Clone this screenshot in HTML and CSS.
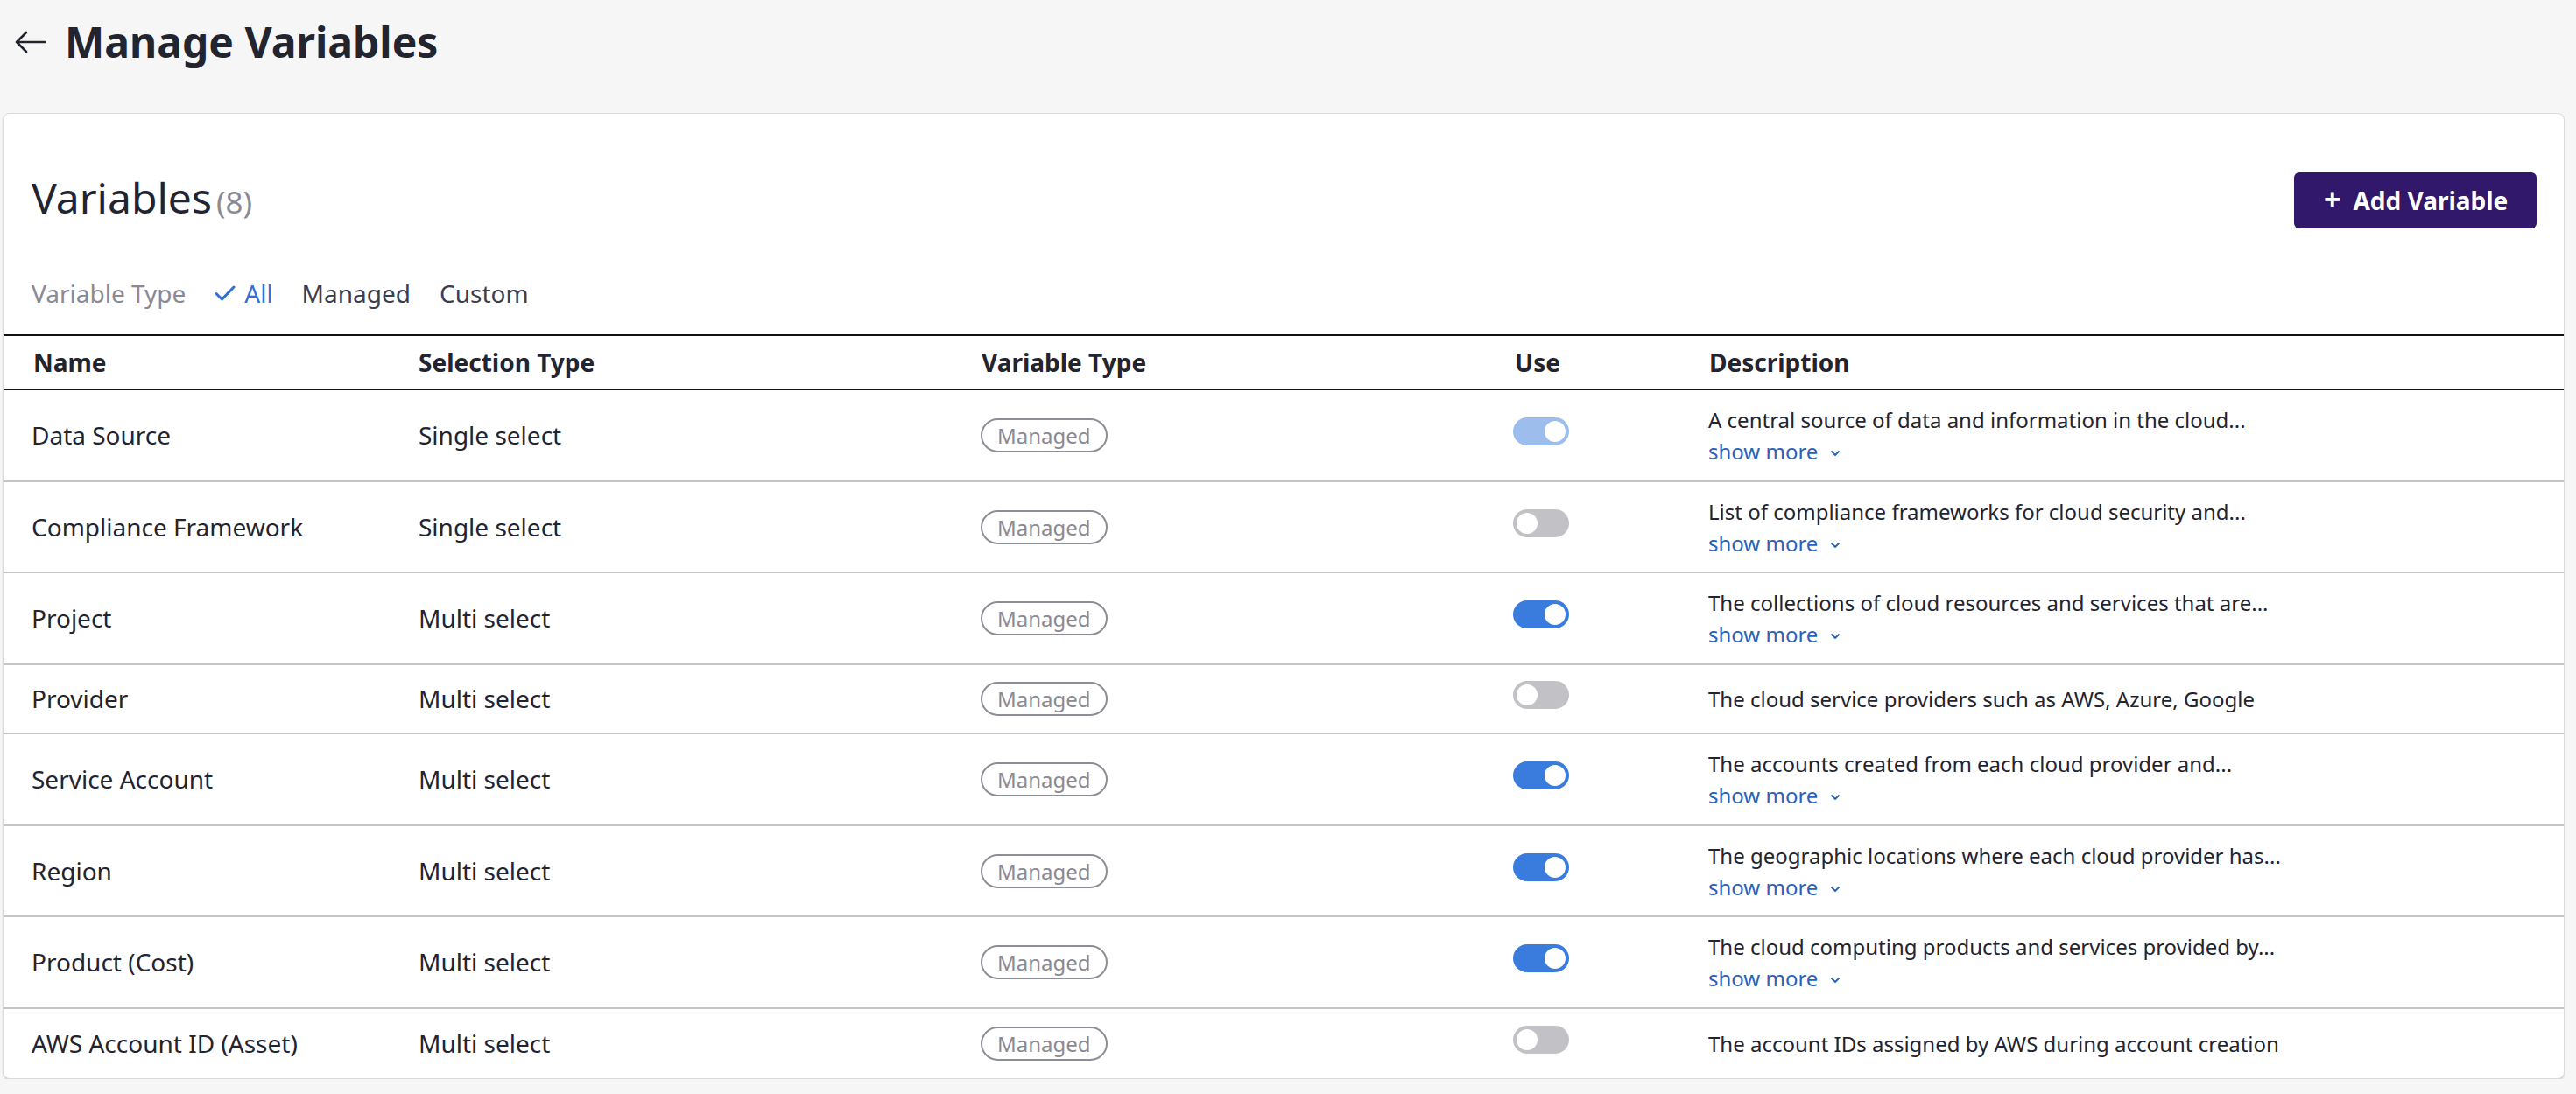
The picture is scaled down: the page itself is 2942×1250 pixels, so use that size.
FILE: index.html
```html
<!DOCTYPE html>
<html lang="en">
<head>
<meta charset="utf-8">
<title>Manage Variables</title>
<link rel="stylesheet" href="styles.css">
</head>
<body>
<header class="page-head">
  <svg class="back" width="36" height="28" viewBox="0 0 36 28" aria-hidden="true"><path d="M35 14H3M14 3L3 14l11 11" fill="none" stroke="#22242f" stroke-width="2.6" stroke-linecap="round" stroke-linejoin="round"/></svg>
  <h1 class="page-title">Manage Variables</h1>
</header>
<section class="card">
  <div class="card-head">
    <h2 class="card-title">Variables<span class="count">(8)</span></h2>
    <button class="btn-add"><span class="plus">+</span>Add Variable</button>
  </div>
  <div class="filters">
    <span class="filter-label">Variable Type</span>
    <span class="filter-opt active"><svg class="check" width="24" height="18" viewBox="0 0 24 18"><path d="M2 9.5l6.5 6.5L22 2" fill="none" stroke="#2f6fd6" stroke-width="3" stroke-linecap="round" stroke-linejoin="round"/></svg>All</span>
    <span class="filter-opt">Managed</span>
    <span class="filter-opt">Custom</span>
  </div>
  <div class="table">
    <div class="row head">
      <div>Name</div><div>Selection Type</div><div>Variable Type</div><div>Use</div><div>Description</div>
    </div>
    <div class="row tall">
      <div>Data Source</div><div>Single select</div><div><span class="badge">Managed</span></div>
      <div><span class="toggle on dim"></span></div>
      <div class="desc"><div>A central source of data and information in the cloud...</div><div class="more">show more<svg width="12" height="8" viewBox="0 0 12 8"><path d="M2 2l4 4 4-4" fill="none" stroke="#2a62bd" stroke-width="1.8" stroke-linecap="round" stroke-linejoin="round"/></svg></div></div>
    </div>
    <div class="row tall">
      <div>Compliance Framework</div><div>Single select</div><div><span class="badge">Managed</span></div>
      <div><span class="toggle"></span></div>
      <div class="desc"><div>List of compliance frameworks for cloud security and...</div><div class="more">show more<svg width="12" height="8" viewBox="0 0 12 8"><path d="M2 2l4 4 4-4" fill="none" stroke="#2a62bd" stroke-width="1.8" stroke-linecap="round" stroke-linejoin="round"/></svg></div></div>
    </div>
    <div class="row tall">
      <div>Project</div><div>Multi select</div><div><span class="badge">Managed</span></div>
      <div><span class="toggle on"></span></div>
      <div class="desc"><div>The collections of cloud resources and services that are...</div><div class="more">show more<svg width="12" height="8" viewBox="0 0 12 8"><path d="M2 2l4 4 4-4" fill="none" stroke="#2a62bd" stroke-width="1.8" stroke-linecap="round" stroke-linejoin="round"/></svg></div></div>
    </div>
    <div class="row short">
      <div>Provider</div><div>Multi select</div><div><span class="badge">Managed</span></div>
      <div><span class="toggle"></span></div>
      <div class="desc"><div>The cloud service providers such as AWS, Azure, Google</div></div>
    </div>
    <div class="row tall">
      <div>Service Account</div><div>Multi select</div><div><span class="badge">Managed</span></div>
      <div><span class="toggle on"></span></div>
      <div class="desc"><div>The accounts created from each cloud provider and...</div><div class="more">show more<svg width="12" height="8" viewBox="0 0 12 8"><path d="M2 2l4 4 4-4" fill="none" stroke="#2a62bd" stroke-width="1.8" stroke-linecap="round" stroke-linejoin="round"/></svg></div></div>
    </div>
    <div class="row tall">
      <div>Region</div><div>Multi select</div><div><span class="badge">Managed</span></div>
      <div><span class="toggle on"></span></div>
      <div class="desc"><div>The geographic locations where each cloud provider has...</div><div class="more">show more<svg width="12" height="8" viewBox="0 0 12 8"><path d="M2 2l4 4 4-4" fill="none" stroke="#2a62bd" stroke-width="1.8" stroke-linecap="round" stroke-linejoin="round"/></svg></div></div>
    </div>
    <div class="row tall">
      <div>Product (Cost)</div><div>Multi select</div><div><span class="badge">Managed</span></div>
      <div><span class="toggle on"></span></div>
      <div class="desc"><div>The cloud computing products and services provided by...</div><div class="more">show more<svg width="12" height="8" viewBox="0 0 12 8"><path d="M2 2l4 4 4-4" fill="none" stroke="#2a62bd" stroke-width="1.8" stroke-linecap="round" stroke-linejoin="round"/></svg></div></div>
    </div>
    <div class="row short last">
      <div>AWS Account ID (Asset)</div><div>Multi select</div><div><span class="badge">Managed</span></div>
      <div><span class="toggle"></span></div>
      <div class="desc"><div>The account IDs assigned by AWS during account creation</div></div>
    </div>
  </div>
</section>
</body>
</html>
```
FILE: styles.css
```css
* { box-sizing: border-box; }
html, body { margin: 0; padding: 0; }
body {
  background: #f6f6f6;
  font-family: "Noto Sans", "Open Sans", sans-serif;
  color: #22242f;
  width: 2942px;
}
.page-head {
  display: flex;
  align-items: center;
  height: 64px;
  margin-top: 16px;
  padding-left: 16px;
  gap: 22px;
}
.back { display: block; }
.page-title {
  margin: 0;
  font-size: 48px;
  line-height: 64px;
  font-weight: 700;
  color: #22242f;
}
.card {
  margin: 49px 13px 0 3px;
  background: #fff;
  border: 1px solid #dadada;
  border-radius: 8px;
  box-shadow: 0 2px 2px rgba(0,0,0,0.12);
  overflow: hidden;
}
.card-head {
  display: flex;
  align-items: center;
  justify-content: space-between;
  padding: 64px 31px 0 32px;
}
.card-title {
  margin: 0;
  font-size: 48px;
  line-height: 64px;
  font-weight: 400;
  color: #22242f;
}
.count {
  font-size: 35px;
  color: #8a8a96;
  margin-left: 5px;
}
.btn-add {
  height: 64px;
  width: 277px;
  border: none;
  border-radius: 6px;
  background: #31186b;
  color: #fff;
  font-family: inherit;
  font-size: 28px;
  font-weight: 700;
  display: flex;
  align-items: center;
  padding: 0 0 0 34px;
}
.plus { font-size: 34px; font-weight: 700; margin-right: 14px; line-height: 1; margin-top: -3px; }
.filters {
  display: flex;
  align-items: center;
  gap: 33px;
  margin-top: 52px;
  padding-left: 32px;
  height: 40px;
  font-size: 28px;
  line-height: 40px;
}
.filter-label { color: #8a8a96; }
.filter-opt { color: #3c3e4e; display: flex; align-items: center; }
.filter-opt.active { color: #2f6fd6; }
.check { margin-right: 10px; }
.table { margin-top: 27px; }
.row {
  display: grid;
  grid-template-columns: 442px 642px 608px 223px 1fr;
  align-items: center;
  padding-left: 32px;
  border-bottom: 2px solid #c5c5c9;
  font-size: 28px;
  color: #22242f;
}
.row.head {
  border-top: 2px solid #111;
  border-bottom: 2px solid #111;
  height: 64px;
  font-weight: 700;
  padding-left: 34px;
  grid-template-columns: 440px 643px 609px 222px 1fr;
}
.row.tall { height: 104.5px; }
.row.short { height: 79.5px; }
.row.last { border-bottom: none; }
.badge {
  display: inline-block;
  height: 39px;
  line-height: 35px;
  padding: 0 17px;
  border: 2px solid #8e8e96;
  border-radius: 20px;
  color: #8a8a94;
  font-size: 24px;
}
.toggle {
  display: block;
  width: 64px;
  height: 32px;
  border-radius: 16px;
  background: #c2c2c6;
  position: relative;
  margin-bottom: 8px;
}
.toggle::after {
  content: "";
  position: absolute;
  top: 4px;
  left: 4px;
  width: 24px;
  height: 24px;
  border-radius: 50%;
  background: #fff;
}
.toggle.on { background: #3a7cde; }
.toggle.on::after { left: 36px; }
.toggle.dim { background: #9dbdec; }
.desc { font-size: 24px; line-height: 36px; color: #22242f; padding-top: 2px; }
.more {
  color: #2a62bd;
  display: flex;
  align-items: center;
}
.more svg { margin-left: 14px; margin-top: 4px; }
```
